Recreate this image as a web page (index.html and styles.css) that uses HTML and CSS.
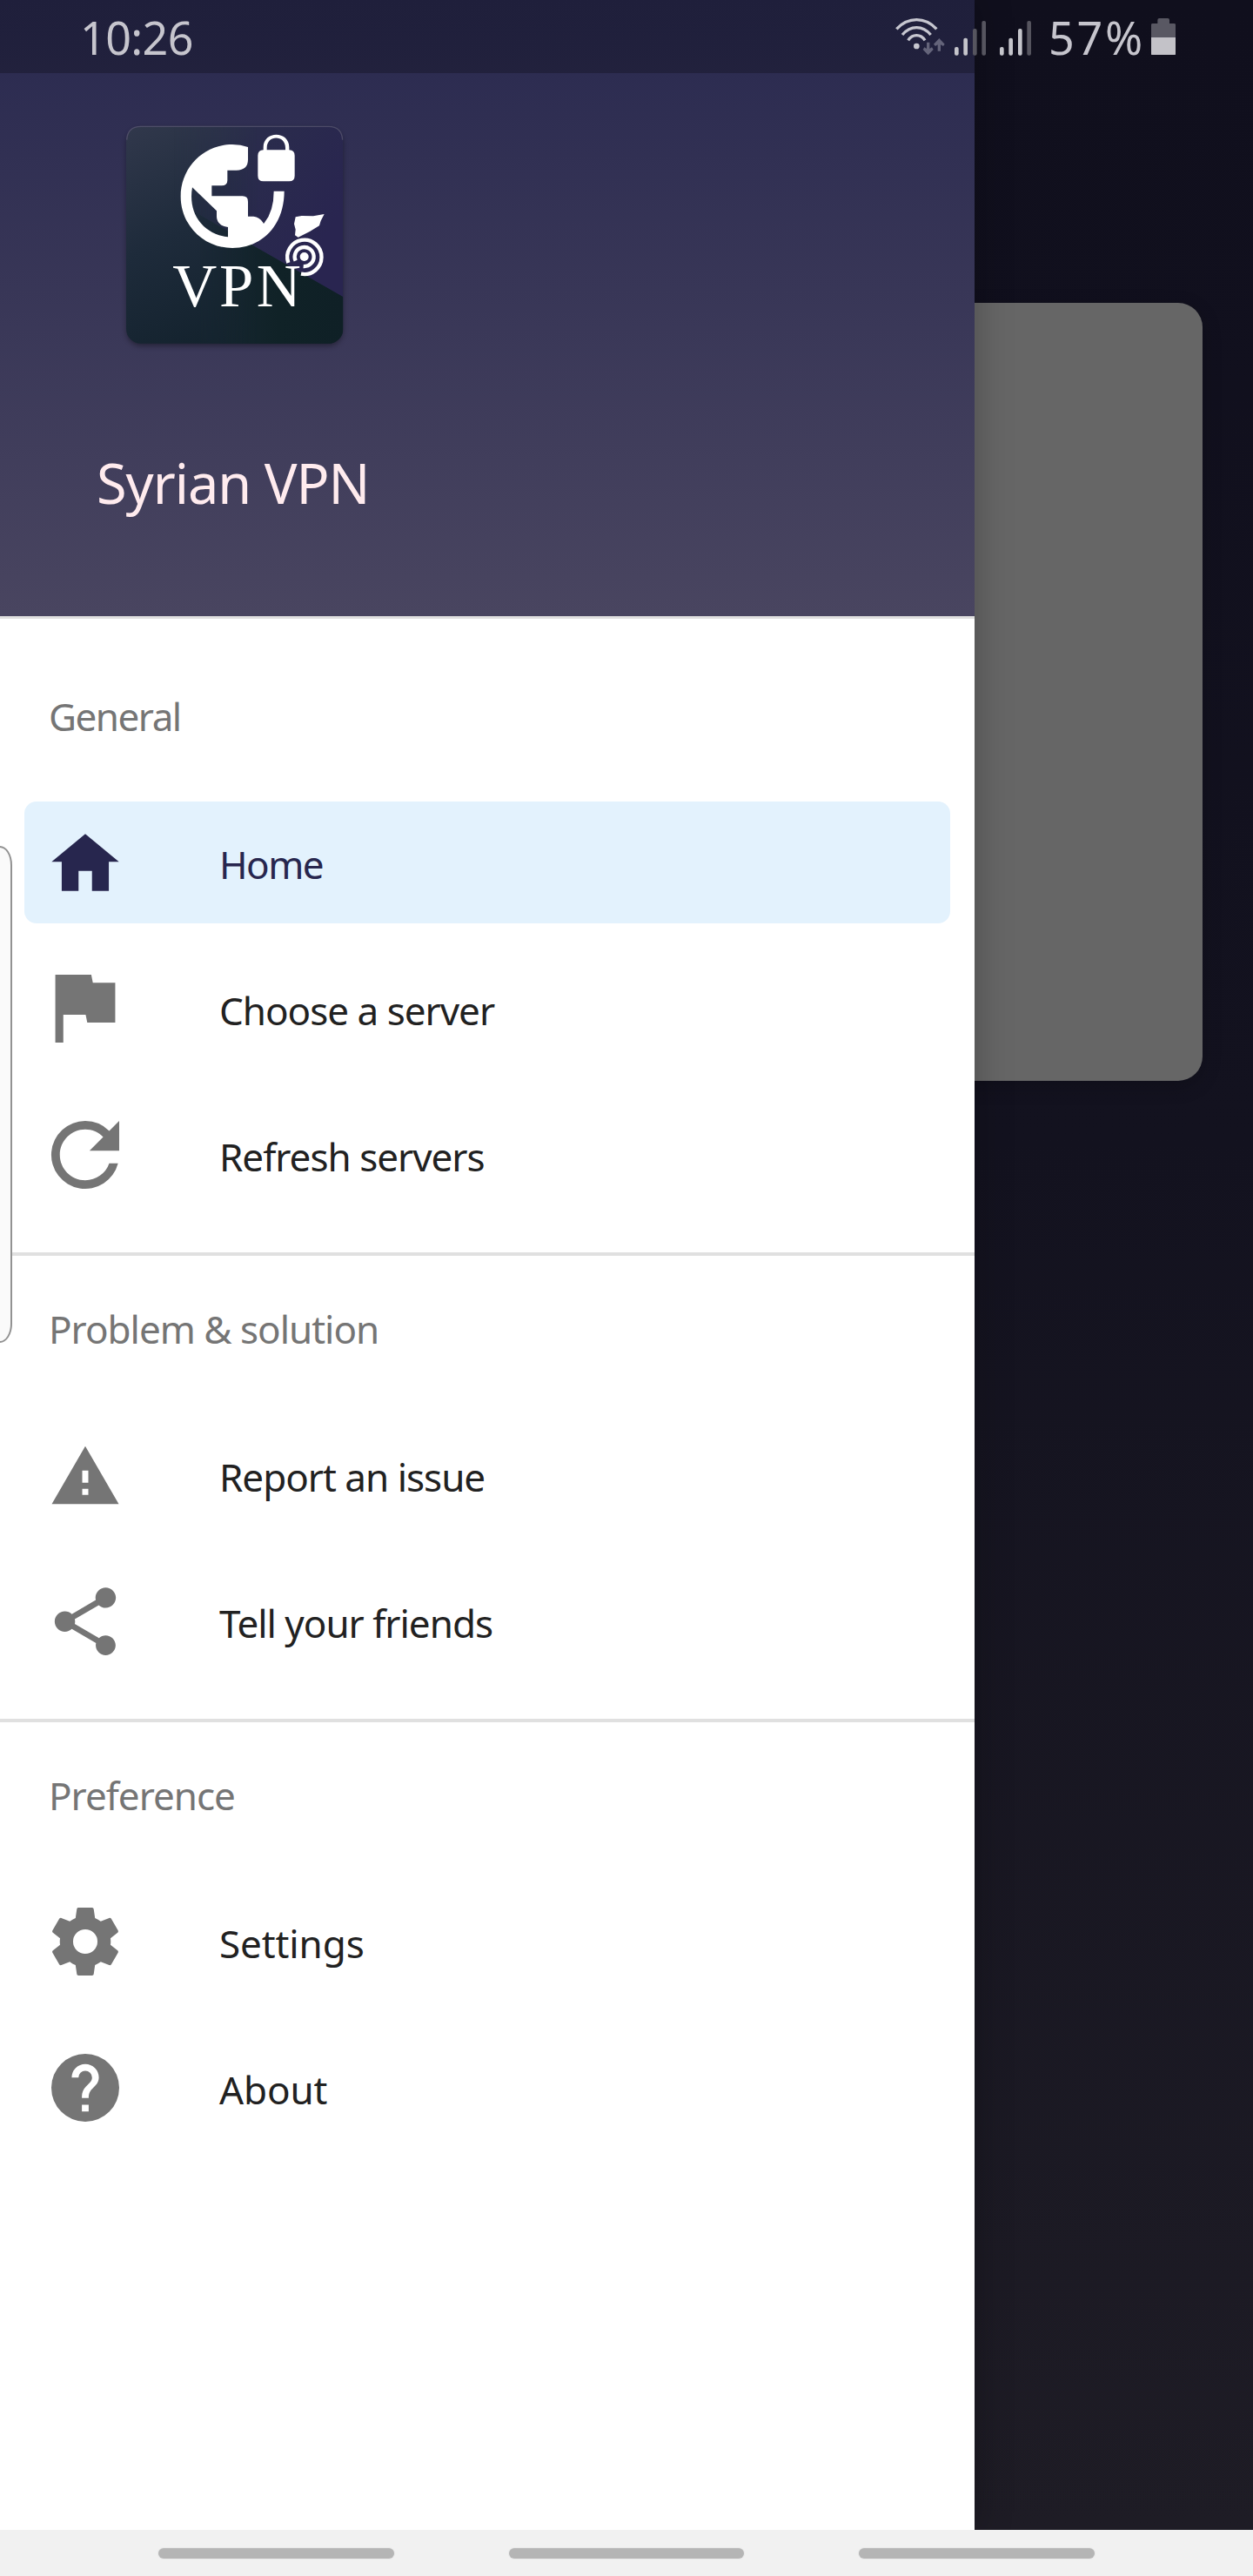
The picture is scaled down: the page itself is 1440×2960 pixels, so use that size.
FILE: index.html
```html
<!DOCTYPE html>
<html lang="en">
<head>
<meta charset="utf-8">
<title>Syrian VPN</title>
<link rel="stylesheet" href="styles.css">
</head>
<body>
<div class="screen">
  <main class="backdrop"><div class="card"></div></main>

  <aside class="drawer">
    <header class="header">
      <svg class="logo" viewBox="0 0 840 840">
        <defs>
          <linearGradient id="slate" x1="0" y1="0" x2=".45" y2="1">
            <stop offset="0" stop-color="#31384c"/><stop offset=".5" stop-color="#1e2b3b"/><stop offset="1" stop-color="#13222d"/>
          </linearGradient>
          <linearGradient id="indigo" x1="0" y1="0" x2="1" y2=".5">
            <stop offset="0" stop-color="#30384d"/><stop offset=".5" stop-color="#2a2c4c"/><stop offset="1" stop-color="#292550"/>
          </linearGradient>
          <linearGradient id="pine" x1="0" y1="0" x2="1" y2="0">
            <stop offset="0" stop-color="#182733"/><stop offset=".55" stop-color="#102227"/><stop offset="1" stop-color="#0f2026"/>
          </linearGradient>
          <linearGradient id="fade" x1="0" y1="0" x2="1" y2="0">
            <stop offset=".25" stop-color="#fff" stop-opacity="0"/><stop offset=".6" stop-color="#fff"/>
          </linearGradient>
          <mask id="right"><rect width="840" height="840" fill="url(#fade)"/></mask>
          <clipPath id="tile"><rect x="45" y="44" width="748" height="750" rx="50"/></clipPath>
          <filter id="soft" x="-10%" y="-10%" width="120%" height="120%"><feGaussianBlur stdDeviation="9"/></filter>
        </defs>
        <rect x="47" y="54" width="744" height="748" rx="50" fill="#000" opacity=".4" filter="url(#soft)"/>
        <g clip-path="url(#tile)">
          <rect x="45" y="42" width="748" height="753" fill="url(#slate)"/>
          <g mask="url(#right)">
            <path d="M45 42H793V634L480 455L45 206Z" fill="url(#indigo)"/>
            <path d="M300 352L480 455L793 634V795H300Z" fill="url(#pine)"/>
          </g>
        </g>
        <path d="M47 92Q50 46 95 46H743Q788 46 791 92" fill="none" stroke="#56546f" stroke-width="4" opacity=".8"/>
        <g fill="#fff">
          <path fill-rule="evenodd" d="M465 117V160Q465 197 425 197H394V232Q394 250 374 250H340V286H446Q465 286 465 305V356H484Q507 358 519 381Q554 340 554 269H590C590 390 510 465 411 465C312 465 233 386 233 287C233 188 312 108 411 108Q440 108 465 117ZM273 256C257 345 309 417 396 427V393C370 391 357 374 357 356V337Z"/>
          <path fill-rule="evenodd" d="M518 127V118C518 60 607 60 607 118V127Q626 128 626 146V216Q626 235 607 235H518Q499 235 499 216V146Q499 128 518 127ZM530 127H594V120C594 74 530 74 530 120Z"/>
          <path d="M629 358L650 354L690 355L728 348L716 371L711 388L678 408L638 428L627 421L629 401L624 382Z"/>
          <circle cx="659" cy="495" r="15"/>
        </g>
        <g fill="none" stroke="#fff">
          <path d="M629 509A33 33 0 1 1 656 528" stroke-width="13"/>
          <path d="M604 516A59 59 0 1 1 648 554" stroke-width="13"/>
        </g>
        <text class="logo-text" x="205 366 494" y="667">VPN</text>
      </svg>
      <h1 class="title">Syrian VPN</h1>
    </header>

    <nav class="menu">
      <section class="group">
        <h2 class="heading snug">General</h2>
        <a class="item active"><svg class="icon" viewBox="0.14 0.64 21.72 21.72"><path d="M9 20v-6h4v6h5v-8.700h3L11 3 1 11.300h3V20z"/></svg><span class="label snug">Home</span></a>
        <a class="item"><svg class="icon" viewBox="3.350 3.350 18.300 18.300"><path d="M14.400 6L14 4H5v17h2v-7h5.600l.4 2h7V6z"/></svg><span class="label">Choose a server</span></a>
        <a class="item"><svg class="icon" viewBox="3.380 3.380 17.240 17.240"><path d="M17.650 6.350A7.958 7.958 0 0 0 12 4a8 8 0 1 0 7.730 10h-2.080A5.990 5.990 0 0 1 12 18c-3.310 0-6-2.690-6-6s2.690-6 6-6c1.660 0 3.140.690 4.220 1.780L13 11h7V4z"/></svg><span class="label">Refresh servers</span></a>
      </section>
      <section class="group">
        <h2 class="heading">Problem &amp; solution</h2>
        <a class="item"><svg class="icon" viewBox="0 -.5 24 24"><path d="M1 21h22L12 2zM13 18h-2v-2h2zM13 14h-2v-4h2z" fill-rule="evenodd"/></svg><span class="label">Report an issue</span></a>
        <a class="item"><svg class="icon" viewBox="1.250 1.200 21.500 21.500"><path d="M18 16.080c-.76 0-1.440.3-1.960.77L8.910 12.700c.05-.23.09-.46.09-.7s-.04-.47-.09-.7l7.050-4.110c.54.5 1.250.81 2.040.81 1.660 0 3-1.340 3-3s-1.340-3-3-3-3 1.340-3 3c0 .24.040.47.090.7L8.040 9.810C7.500 9.310 6.790 9 6 9c-1.660 0-3 1.340-3 3s1.340 3 3 3c.79 0 1.500-.31 2.040-.81l7.120 4.160c-.05.21-.08.43-.08.65 0 1.610 1.310 2.920 2.920 2.920s2.920-1.310 2.920-2.920-1.310-2.920-2.920-2.920z"/></svg><span class="label">Tell your friends</span></a>
      </section>
      <section class="group">
        <h2 class="heading">Preference</h2>
        <a class="item"><svg class="icon" viewBox="1.230 1.230 21.540 21.540"><path d="M19.430 12.980c.04-.32.070-.64.070-.98s-.03-.66-.07-.98l2.110-1.650c.19-.15.240-.42.120-.64l-2-3.460c-.12-.22-.39-.3-.61-.22l-2.490 1c-.52-.4-1.080-.73-1.690-.98l-.38-2.650A.488.488 0 0 0 14 2h-4c-.25 0-.46.18-.49.42l-.38 2.650c-.61.25-1.170.59-1.690.98l-2.490-1c-.23-.09-.49 0-.61.22l-2 3.460c-.13.22-.07.49.12.64l2.110 1.650c-.04.32-.07.65-.07.98s.030.660.070.980l-2.110 1.650c-.19.150-.24.420-.12.640l2 3.460c.12.220.39.3.61.220l2.490-1c.52.4 1.080.73 1.690.98l.38 2.650c.03.240.240.420.490.420h4c.25 0 .46-.18.49-.42l.38-2.650c.61-.25 1.170-.59 1.690-.98l2.490 1c.23.090.490 0 .61-.22l2-3.460c.12-.22.070-.49-.12-.64zM12 15.600A3.600 3.600 0 1 1 12 8.400a3.600 3.600 0 0 1 0 7.200z"/></svg><span class="label loose">Settings</span></a>
        <a class="item"><svg class="icon" viewBox="1.230 1.230 21.540 21.540"><path d="M12 2a10 10 0 1 0 0 20 10 10 0 0 0 0-20zm1 17h-2v-2h2zm2.070-7.750-.9.920C13.450 12.900 13 13.500 13 15h-2v-.5c0-1.100.45-2.100 1.170-2.830l1.240-1.260c.37-.36.59-.86.59-1.410a2 2 0 1 0-4 0H8a4 4 0 1 1 8 0c0 .88-.36 1.680-.93 2.250z"/></svg><span class="label loose">About</span></a>
      </section>
    </nav>
  </aside>

  <div class="statusbar">
    <span class="time">10:26</span>
    <svg class="signals" viewBox="84 54 476 138">
      <g fill="none" stroke="#c7c7d0" stroke-width="10">
        <path d="M91 97Q121 65 160 65T229 97"/>
        <path d="M111 117Q132 92 160 92T209 117"/>
        <path d="M131 136Q142 119 160 119T189 136"/>
      </g>
      <circle cx="160" cy="156" r="10" fill="#c7c7d0"/>
      <g fill="#64647a">
        <path d="M195 143H205V165L213 160L218 168L200 187L182 168L187 160L195 165Z"/>
        <path d="M233 173H243V151L252 156L257 149L238 129L219 149L225 156L233 151Z"/>
      </g>
      <g fill="#c5c5cb">
        <rect x="291" y="159" width="14" height="29" rx="6"/><rect x="322" y="128" width="14" height="60" rx="6"/>
        <rect x="447" y="159" width="14" height="29" rx="6"/><rect x="478" y="128" width="14" height="60" rx="6"/><rect x="510" y="96" width="14" height="92" rx="6"/>
      </g>
      <g fill="#56555f">
        <rect x="354" y="96" width="14" height="92" rx="6"/><rect x="385" y="69" width="14" height="119" rx="6"/><rect x="541" y="69" width="14" height="119" rx="6"/>
      </g>
    </svg>
    <span class="percent">57%</span>
    <svg class="battery" viewBox="0 0 84 128"><path d="M0 66V22Q0 18 5 18H22V6Q22 0 28 0H57Q63 0 63 6V18H79Q84 18 84 22V66Z" fill="#595863"/><path d="M0 66H84V122Q84 128 78 128H6Q0 128 0 122Z" fill="#c3c2c8"/></svg>
  </div>

  <div class="edge-handle"></div>
  <footer class="navbar"><i></i><i></i><i></i></footer>
</div>
</body>
</html>
```
FILE: styles.css
```css
* { box-sizing: border-box; }
body {
  margin: 0;
  font-family: "Noto Sans", "Open Sans", sans-serif;
}
.screen {
  position: relative;
  display: grid;
  grid-template: 2907px 53px / 1120px 320px;
  width: 1440px;
  height: 2960px;
  overflow: hidden;
}
.backdrop {
  grid-area: 1 / 1 / 2 / 3;
  padding: 348px 58px 0;
  background: linear-gradient(#100f1d, #13121f 45%, #1e1c25);
}
.card {
  height: 894px;
  border-radius: 28px;
  background: #666;
  box-shadow: 0 6px 22px rgba(0, 0, 0, .2);
}
.drawer {
  grid-area: 1 / 1 / 2 / 2;
  position: relative;
  background: #fff;
  box-shadow: 0 0 40px rgba(0, 0, 0, .25);
}
.header {
  display: flex;
  flex-direction: column;
  align-items: flex-start;
  gap: 102px;
  height: 711px;
  padding: 130px 0 0 111px;
  border-bottom: 3px solid #e0e0e0;
  background: linear-gradient(#29294f, #494560);
}
.logo {
  width: 280px;
  height: 280px;
  margin-left: 19px;
}
.logo-text {
  font: 212px "Liberation Serif", serif;
  fill: #fff;
}
.title {
  margin: 0;
  font-size: 63px;
  font-weight: 400;
  line-height: 86px;
  letter-spacing: -1px;
  color: #ffebee;
}
.menu {
  font-size: 44px;
  letter-spacing: -1px;
}
.group {
  display: flex;
  flex-direction: column;
  gap: 28px;
  padding: 0 28px 42px;
}
.group + .group {
  border-top: 4px solid #e0e0e0;
}
.heading {
  height: 168px;
  margin: 0 0 -14px;
  padding: 28px 28px 0;
  font-size: 44px;
  font-weight: 400;
  line-height: 112px;
  color: #757575;
}
.group:first-child .heading {
  height: 196px;
  padding-top: 56px;
}
.item {
  display: flex;
  align-items: center;
  gap: 112px;
  height: 140px;
  padding: 0 28px;
  border-radius: 14px;
  color: #212121;
}
.label { padding-top: 4px; }
.snug { letter-spacing: -1.500px; }
.loose { letter-spacing: -.1px; }
.icon {
  flex: none;
  width: 84px;
  height: 84px;
  fill: #757575;
}
.active {
  background: #e3f2fd;
  color: #27264e;
}
.active .icon { fill: #27264e; }
.statusbar {
  position: absolute;
  inset: 0 0 auto;
  display: flex;
  align-items: center;
  height: 84px;
  padding: 0 89px 0 92px;
  font-size: 52px;
  line-height: 84px;
  color: #c6c5cd;
  background: linear-gradient(90deg, rgba(0, 0, 0, .25) 1120px, transparent 1120px);
}
.time {
  flex: 1;
  padding-top: 1px;
  letter-spacing: -.6px;
}
.signals {
  width: 158.660px;
  height: 46px;
  margin-right: 18px;
}
.percent {
  width: 118px;
  padding-top: 1px;
  letter-spacing: 2.800px;
}
.battery {
  width: 28px;
  height: 42.700px;
}
.edge-handle {
  position: absolute;
  top: 972px;
  left: -30px;
  width: 44px;
  height: 571px;
  border: 2px solid #929292;
  border-radius: 14px / 22px;
  background: #fafafa;
}
.navbar {
  grid-area: 2 / 1 / 3 / 3;
  position: relative;
  display: flex;
  gap: 132px;
  padding: 21px 182px 0;
  background: #f1f1f1;
}
.navbar i {
  width: 270.670px;
  height: 12px;
  border-radius: 6px;
  background: #b5b5b5;
  box-shadow: 0 0 0 1px #e9e9e9;
}
```
